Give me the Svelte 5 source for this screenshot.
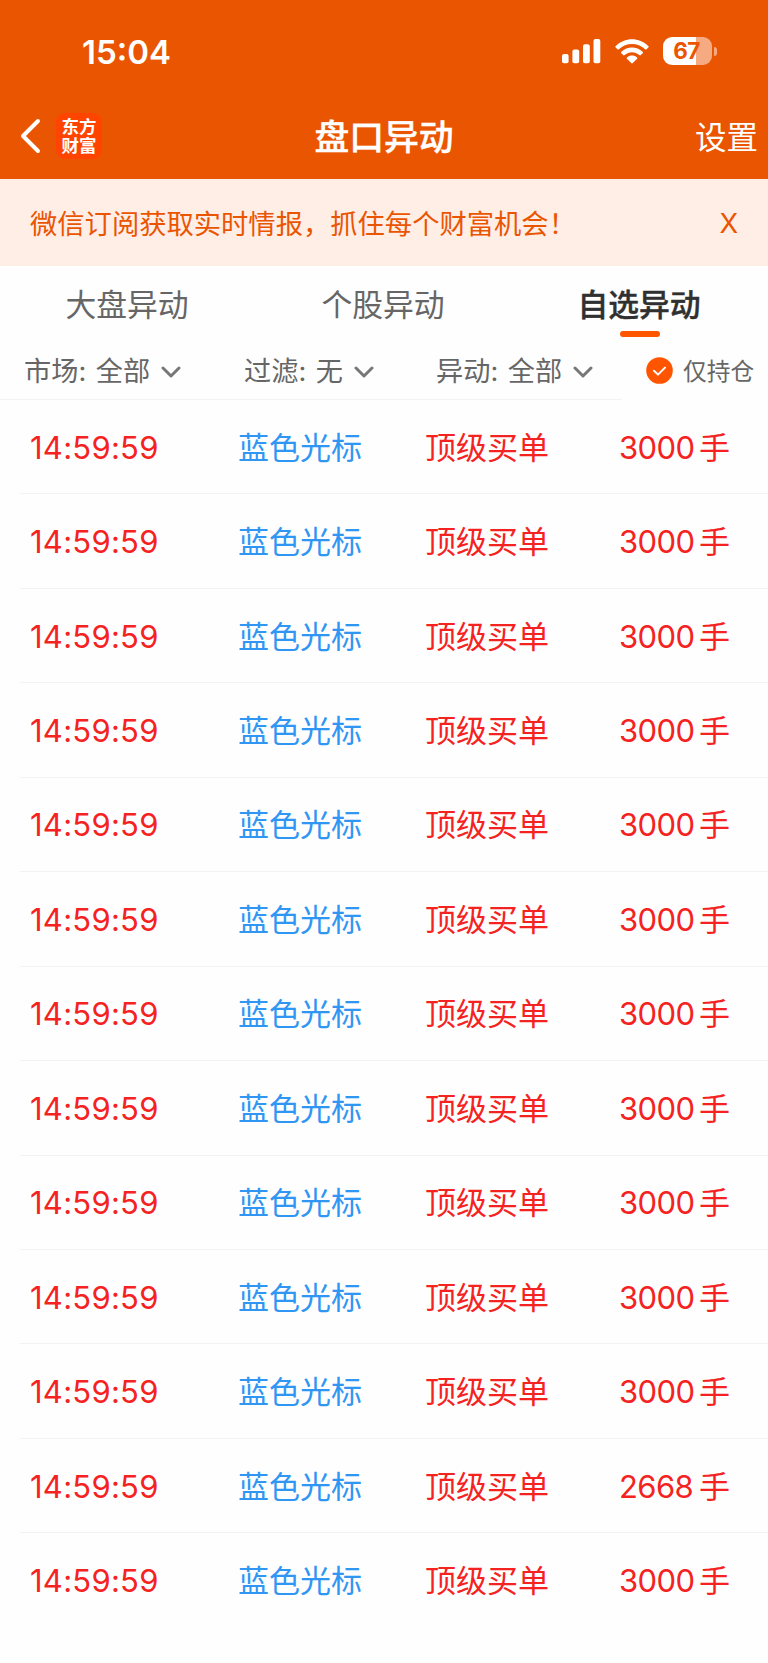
<script lang="ts">
	interface Alert {
		time: string;
		stock: string;
		type: string;
		volume: number;
	}

	const tabs = ['大盘异动', '个股异动', '自选异动'];
	const filters = [
		{ key: 'market', label: '市场', value: '全部' },
		{ key: 'exclude', label: '过滤', value: '无' },
		{ key: 'kind', label: '异动', value: '全部' }
	];
	const volumes = [3000, 3000, 3000, 3000, 3000, 3000, 3000, 3000, 3000, 3000, 3000, 2668, 3000];
	const alerts: Alert[] = volumes.map((volume) => ({
		time: '14:59:59',
		stock: '蓝色光标',
		type: '顶级买单',
		volume
	}));

	let activeTab = $state(2);
	let holdingsOnly = $state(true);
	let showNotice = $state(true);
</script>

<div class="screen">
	<header>
		<div class="status-bar">
			<span class="clock">15:04</span>
			<div class="status-icons">
				<svg class="signal" width="39" height="25" viewBox="0 0 39 25" fill="#fff">
					<rect x="0" y="15" width="6.6" height="9.3" rx="2" />
					<rect x="10.4" y="10.4" width="6.8" height="13.9" rx="2" />
					<rect x="21" y="5.2" width="6.8" height="19.1" rx="2" />
					<rect x="31.5" y="0" width="6.8" height="24.3" rx="2" />
				</svg>
				<svg class="wifi" width="34" height="25" viewBox="0 0 34 25" fill="#fff">
					<path d="M.7 7.1C9.7-2 24.3-2 33.3 7.1c.5.5.5.9 0 1.4l-1.8 1.8c-.4.4-.9.4-1.4 0-7.3-7.1-18.9-7.1-26.2 0-.5.4-1 .4-1.4 0L.7 8.5c-.5-.5-.5-.9 0-1.4z" />
					<path d="M6.3 12.8c6-5.8 15.4-5.8 21.4 0 .5.5.5.9 0 1.4l-1.9 1.9c-.4.4-.9.4-1.4 0-4.2-3.9-10.6-3.9-14.8 0-.5.4-1 .4-1.4 0l-1.9-1.9c-.5-.5-.5-.9 0-1.4z" />
					<path d="M12 18.4c2.9-2.5 7.1-2.5 10 0 .5.5.5.9.1 1.4l-4.3 4.3c-.5.5-1.1.5-1.6 0l-4.3-4.3c-.4-.5-.4-.9.1-1.4z" />
				</svg>
				<div class="battery">
					<span class="battery-level">67</span>
				</div>
				<span class="battery-cap"></span>
			</div>
		</div>

		<nav>
			<div class="nav-left">
				<svg class="back" width="22" height="36" viewBox="0 0 22 36" fill="none" stroke="#fff" stroke-width="4" stroke-linecap="round" stroke-linejoin="round">
					<path d="M18 3L3 18l15 15" />
				</svg>
				<div class="logo">
					<span>东方</span>
					<span>财富</span>
				</div>
			</div>
			<h1>盘口异动</h1>
			<span class="settings">设置</span>
		</nav>
	</header>

	{#if showNotice}
		<div class="notice">
			<span>微信订阅获取实时情报，抓住每个财富机会！</span>
			<button class="notice-close" onclick={() => (showNotice = false)}>X</button>
		</div>
	{/if}

	<div class="tabs">
		{#each tabs as tab, i}
			<button class="tab" class:active={activeTab === i} onclick={() => (activeTab = i)}>{tab}</button>
		{/each}
	</div>

	<div class="filters">
		{#each filters as filter (filter.key)}
			<div class="filter">
				<span class="label">{filter.label}: {filter.value}</span>
				<svg width="20" height="13" viewBox="0 0 20 13" fill="none" stroke="#777" stroke-width="3" stroke-linecap="round" stroke-linejoin="round">
					<path d="M2 2l8 8 8-8" />
				</svg>
			</div>
		{/each}
		<button class="holdings" onclick={() => (holdingsOnly = !holdingsOnly)}>
			<svg width="27" height="27" viewBox="0 0 27 27" fill="none">
				<circle cx="13.5" cy="13.5" r="13.3" fill={holdingsOnly ? '#ff5500' : '#ccc'} />
				<path d="M8 13.8l4 3.8 7-7" stroke="#fff" stroke-width="2" stroke-linecap="round" stroke-linejoin="round" />
			</svg>
			<span>仅持仓</span>
		</button>
	</div>

	<ul class="alerts">
		{#each alerts as alert}
			<li>
				<span class="time">{alert.time}</span>
				<span class="stock">{alert.stock}</span>
				<span class="type">{alert.type}</span>
				<span class="volume"><span class="amount">{alert.volume}</span>手</span>
			</li>
		{/each}
	</ul>
</div>

<style>
	:global(body) {
		margin: 0;
		background: #fefefe;
	}

	.screen {
		width: 768px;
		height: 1663px;
		overflow: hidden;
		background: #fefefe;
		font-family: Inter, 'Noto Sans CJK SC', sans-serif;
		color: #666;
	}

	button {
		padding: 0;
		border: 0;
		background: none;
		color: inherit;
		font: inherit;
		cursor: pointer;
	}

	svg {
		display: block;
		flex-shrink: 0;
	}

	header {
		height: 179px;
		background: #ea5502;
		color: #fff;
	}

	.status-bar {
		display: flex;
		justify-content: space-between;
		align-items: center;
		height: 102px;
		padding: 0 51.5px 0 82px;
		box-sizing: border-box;
	}

	.clock {
		padding-top: 1px;
		font-size: 33px;
		font-weight: 600;
		line-height: 40px;
	}

	.status-icons {
		display: flex;
		align-items: center;
	}

	.wifi {
		margin-left: 14px;
	}

	.battery {
		display: flex;
		align-items: center;
		justify-content: center;
		width: 49px;
		height: 28px;
		margin-left: 14px;
		border-radius: 9px;
		background: linear-gradient(90deg, #fff 67%, #f5aa81 67%);
	}

	.battery-level {
		padding-right: 1px;
		color: #ea5502;
		font-size: 22.5px;
		font-weight: 700;
		line-height: 28px;
		letter-spacing: -0.6px;
	}

	.battery-cap {
		width: 3px;
		height: 9px;
		margin-left: 2px;
		border-radius: 0 4px 4px 0;
		background: #f5aa81;
	}

	nav {
		display: grid;
		grid-template-columns: 1fr auto 1fr;
		align-items: center;
		height: 68px;
		padding: 0 10px 0 20px;
	}

	.nav-left {
		display: flex;
		align-items: center;
		gap: 14px;
	}

	.logo {
		display: flex;
		flex-direction: column;
		align-items: center;
		justify-content: center;
		width: 46px;
		height: 46px;
		border-radius: 9px;
		background: #ff4400;
		font-size: 17.5px;
		font-weight: 700;
		line-height: 19.5px;
	}

	h1 {
		margin: 0 10px 0 0;
		padding-top: 1px;
		font-size: 34.8px;
		font-weight: 500;
		line-height: 50px;
		-webkit-text-stroke: 0.4px;
	}

	.settings {
		justify-self: end;
		padding-top: 3px;
		font-size: 31.5px;
		line-height: 46px;
	}

	.notice {
		display: flex;
		align-items: center;
		justify-content: space-between;
		height: 87px;
		padding: 0 30px 2px 30px;
		box-sizing: border-box;
		background: #feeee6;
		color: #ea5502;
		font-size: 27.3px;
	}

	.notice-close {
		padding-top: 3px;
	}

	.tabs {
		display: flex;
		height: 78px;
	}

	.tab {
		position: relative;
		flex: 1;
		padding: 0 2px 1px 0;
		font-size: 30.8px;
		line-height: 77px;
	}

	.tab.active {
		color: #303030;
		font-weight: 500;
		-webkit-text-stroke: 0.4px;
	}

	.tab.active::after {
		content: '';
		position: absolute;
		bottom: 7px;
		left: 50%;
		width: 40px;
		height: 6px;
		margin-left: -20px;
		border-radius: 3px;
		background: #ff5500;
	}

	.filters {
		display: grid;
		grid-template-columns: 220px 192px 210px auto;
		align-items: center;
		height: 56px;
		padding-left: 24px;
		background: linear-gradient(#f3f3f3, #f3f3f3) 0 100% / 622px 1px no-repeat;
	}

	.filter {
		display: flex;
		align-items: center;
		gap: 11px;
		font-size: 27.2px;
		line-height: 40px;
		white-space: nowrap;
	}

	.label {
		word-spacing: 2px;
	}

	.holdings {
		display: flex;
		align-items: center;
		gap: 10px;
		padding-bottom: 4px;
		font-size: 23.7px;
	}

	.alerts {
		margin: 0;
		padding: 0 0 0 20px;
		list-style: none;
	}

	li {
		display: grid;
		grid-template-columns: 208px 187px 194px auto;
		align-items: center;
		height: 94.45px;
		padding: 2px 0 0 10px;
		border-bottom: 1px solid #f3f3f3;
		box-sizing: border-box;
		color: #f52222;
		font-size: 31px;
		line-height: 44px;
	}

	li:last-child {
		border-bottom: 0;
	}

	.time {
		letter-spacing: 0.25px;
	}

	.stock {
		color: #3096f3;
	}

	.amount {
		display: inline-block;
		width: 80px;
		letter-spacing: -0.6px;
	}
</style>
